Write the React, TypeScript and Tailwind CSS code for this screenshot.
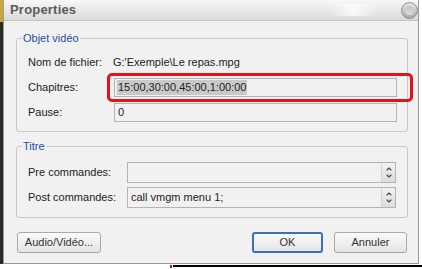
import { ChevronDown, ChevronUp } from 'lucide-react'

function Spinner() {
    return (
        <div className="w-[14px] h-full flex flex-col items-center justify-center border-l border-[#d4d4d4] bg-linear-to-b from-[#f2f2f2] to-[#dcdcdc] text-[#4a4a4a]">
            <ChevronUp size={8} strokeWidth={3.5} className="-mb-[1px]" />
            <ChevronDown size={8} strokeWidth={3.5} />
        </div>
    )
}

function GroupBox({ title, className, children }: { title: string; className: string; children: React.ReactNode }) {
    return (
        <div className={`relative ml-[12px] w-[392px] border border-[#c9c9c9] rounded-[3px] ${className}`}>
            <span className="absolute -top-[8px] left-[5px] bg-[#f1f1f1] px-[1px] leading-[14px] text-[#1d4f9e]">{title}</span>
            {children}
        </div>
    )
}

function Button({ label, primary }: { label: string; primary?: boolean }) {
    return (
        <div
            className={`h-[21px] flex items-center justify-center rounded-[3px] bg-linear-to-b from-[#fbfbfb] to-[#e4e4e4] text-[#333] ${
                primary ? 'border-2 border-[#3d6cc4]' : 'border border-[#a8a8a8]'
            }`}
        >
            {label}
        </div>
    )
}

export default function App() {
    return (
        <div className="w-[422px] h-[269px] bg-white flex flex-col overflow-hidden font-['Liberation_Sans',Arial,sans-serif] text-[11px]">
            <div className="flex h-[264px]">
                {/* bout de bureau */}
                <div className="w-[3px] h-full flex flex-col">
                    <div className="h-[22px] bg-[#c9a83a]" />
                    <div className="flex-1 bg-[#2a2a22]" />
                </div>

                {/* fenetre */}
                <div className="w-[416px] h-full flex flex-col border-x border-b border-[#9a9a9a]">
                    <div className="h-[21px] flex items-center border-b border-[#c2c2c2] bg-linear-to-b from-[#f8f8f8] via-[#e8e8e8] to-[#dadada] pl-[6px]">
                        <span className="text-[13px] font-bold text-[#5a5a5a] tracking-[0.2px]">Properties</span>
                        <div className="ml-auto mr-[22px] w-[50px] h-[12px] rounded-full bg-linear-to-r from-transparent via-white/80 to-transparent" />
                        <div className="w-[17px] h-[17px] rounded-full border border-[#8f8f8f] bg-linear-to-b from-[#e6e6e6] to-[#a9a9a9] flex items-center justify-center">
                            <div className="w-[9px] h-[9px] rounded-full bg-linear-to-b from-[#c4c4c4] to-[#dedede]" />
                        </div>
                    </div>

                    <div className="flex-1 bg-[#f1f1f1] flex flex-col text-[#222]">
                        {/* Objet video */}
                        <GroupBox title="Objet vidéo" className="mt-[17px] h-[94px] pt-[14px] pl-[11px]">
                            <div className="flex flex-col gap-[6px]">
                                <div className="h-[19px] flex items-center">
                                    <span className="w-[85px]">Nom de fichier:</span>
                                    <span>G:'Exemple\Le repas.mpg</span>
                                </div>
                                <div className="h-[19px] flex items-center">
                                    <span className="w-[86px]">Chapitres:</span>
                                    <div className="w-[283px] h-full border border-[#b3b3b3] flex items-center pl-[2px]">
                                        <span className="bg-[#c9c9c9] leading-[15px] px-[1px]">15:00,30:00,45:00,1:00:00</span>
                                    </div>
                                </div>
                                <div className="h-[19px] flex items-center">
                                    <span className="w-[86px]">Pause:</span>
                                    <div className="w-[283px] h-full border border-[#b3b3b3] flex items-center pl-[3px]">0</div>
                                </div>
                            </div>
                            <div className="absolute left-[90px] top-[34px] w-[306px] h-[29px] border-[3px] border-[#e5121a] rounded-[5px]" />
                        </GroupBox>

                        {/* Titre */}
                        <GroupBox title="Titre" className="mt-[14px] h-[72px] pt-[15px] pl-[11px]">
                            <div className="flex flex-col gap-[4px]">
                                <div className="h-[21px] flex items-center">
                                    <span className="w-[99px]">Pre commandes:</span>
                                    <div className="w-[269px] h-full border border-[#b3b3b3] flex justify-between">
                                        <span />
                                        <Spinner />
                                    </div>
                                </div>
                                <div className="h-[21px] flex items-center">
                                    <span className="w-[99px]">Post commandes:</span>
                                    <div className="w-[269px] h-full border border-[#b3b3b3] flex items-center justify-between pl-[3px]">
                                        <span>call vmgm menu 1;</span>
                                        <Spinner />
                                    </div>
                                </div>
                            </div>
                        </GroupBox>

                        {/* boutons */}
                        <div className="mt-[14px] flex pl-[13px]">
                            <div className="w-[84px]">
                                <Button label="Audio/Vidéo..." />
                            </div>
                            <div className="w-[71px] ml-[151px]">
                                <Button label="OK" primary />
                            </div>
                            <div className="w-[73px] ml-[11px]">
                                <Button label="Annuler" />
                            </div>
                        </div>
                    </div>
                </div>
            </div>

            <div className="flex items-start pt-[1px]">
                <div className="ml-[170px] w-[2px] h-[3px] bg-[#d0141a]" />
                <div className="ml-[1px] flex-1 h-[2px] bg-black" />
            </div>
        </div>
    )
}
